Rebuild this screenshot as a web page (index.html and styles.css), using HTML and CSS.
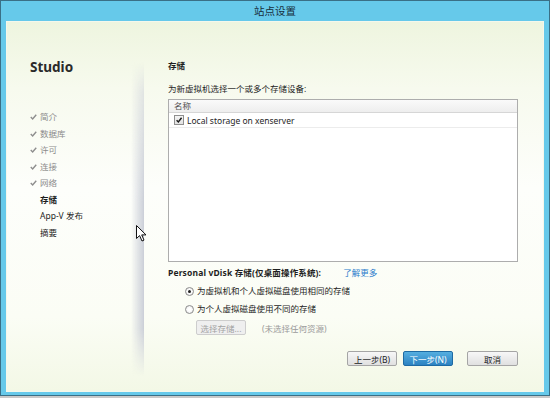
FILE: index.html
```html
<!DOCTYPE html>
<html lang="zh-CN">
<head>
    <meta charset="UTF-8">
    <title>站点设置</title>
    <link rel="stylesheet" href="styles.css">
</head>
<body>
    <div class="window">
        <div class="titlebar">站点设置</div>

        <div class="content">
            <aside class="sidebar">
                <h1 class="brand">Studio</h1>
                <ul class="steps">
                    <li class="done"><svg class="tick" viewBox="0 0 8 7"><path d="M0.8 3.6 L3 5.8 L7.2 0.8"/></svg>简介</li>
                    <li class="done"><svg class="tick" viewBox="0 0 8 7"><path d="M0.8 3.6 L3 5.8 L7.2 0.8"/></svg>数据库</li>
                    <li class="done"><svg class="tick" viewBox="0 0 8 7"><path d="M0.8 3.6 L3 5.8 L7.2 0.8"/></svg>许可</li>
                    <li class="done"><svg class="tick" viewBox="0 0 8 7"><path d="M0.8 3.6 L3 5.8 L7.2 0.8"/></svg>连接</li>
                    <li class="done"><svg class="tick" viewBox="0 0 8 7"><path d="M0.8 3.6 L3 5.8 L7.2 0.8"/></svg>网络</li>
                    <li class="current">存储</li>
                    <li>App-V 发布</li>
                    <li>摘要</li>
                </ul>
            </aside>

            <main class="panel">
                <h2 class="panel-title">存储</h2>
                <p class="hint">为新虚拟机选择一个或多个存储设备:</p>

                <div class="list">
                    <div class="list-head">名称</div>
                    <div class="list-row">
                        <span class="checkbox"><svg viewBox="0 0 10 10"><path d="M2 5.2 L4.2 7.4 L8.2 2.2"/></svg></span>
                        Local storage on xenserver
                    </div>
                </div>

                <div class="pvd">
                    <span class="pvd-label">Personal vDisk 存储(仅桌面操作系统):</span>
                    <a class="learn" href="#">了解更多</a>
                </div>

                <div class="radio-row"><span class="radio on"></span>为虚拟机和个人虚拟磁盘使用相同的存储</div>
                <div class="radio-row"><span class="radio"></span>为个人虚拟磁盘使用不同的存储</div>

                <div class="select-row">
                    <button class="btn btn-disabled" type="button" disabled>选择存储...</button>
                    <span class="none">(未选择任何资源)</span>
                </div>

                <div class="actions">
                    <button class="btn" type="button">上一步(B)</button>
                    <button class="btn btn-primary" type="button">下一步(N)</button>
                    <button class="btn btn-cancel" type="button">取消</button>
                </div>
            </main>

            <svg class="cursor" viewBox="0 0 11 17"><path d="M0.5 0.5 L0.5 13.5 L3.6 10.6 L6 16 L8 15.1 L5.7 9.9 L10 9.9 Z"/></svg>
        </div>
    </div>
</body>
</html>
```

FILE: styles.css
```css
:root {
    --frame: #66c9ea;
    --frame-edge: #3a6f86;
    --text: #1e1e1e;
    --muted: #8b8b8b;
    --line: #adadad;
    --link: #2a7ccc;
}

* {
    margin: 0;
    padding: 0;
    box-sizing: border-box;
}

body {
    background-color: #c9c9c9;
    font-family: 'Noto Sans', 'Noto Sans CJK SC', sans-serif;
    font-size: 8.5px;
    color: var(--text);
}

.window {
    width: 550px;
    height: 396px;
    background-color: var(--frame);
    border: 1px solid var(--frame-edge);
    display: flex;
    flex-direction: column;
}

.titlebar {
    height: 20px;
    line-height: 20px;
    text-align: center;
    font-size: 10.5px;
    color: #182f3d;
}

.content {
    flex: 1;
    margin: 0 5px 3px 5px;
    display: flex;
    position: relative;
    background: linear-gradient(180deg, #eef5df 0%, #f7faee 18%, #fdfefb 45%, #fbfdf5 80%, #f3f8e6 100%);
    border: 1px solid #f4f8ec;
}

/* left column */
.sidebar {
    width: 137px;
    padding: 36px 0 0 23px;
    position: relative;
}

.sidebar::after {
    content: '';
    position: absolute;
    top: 40px;
    right: 0;
    bottom: 15px;
    width: 13px;
    background: linear-gradient(90deg, rgba(215, 218, 225, 0), rgba(200, 204, 214, 0.95));
    -webkit-mask-image: linear-gradient(180deg, transparent 0, rgba(0, 0, 0, 0.5) 30px, #000 140px, #000 85%, transparent 100%);
    mask-image: linear-gradient(180deg, transparent 0, rgba(0, 0, 0, 0.5) 30px, #000 140px, #000 85%, transparent 100%);
}

.brand {
    font-size: 13.5px;
    font-weight: 700;
    color: #2a2a2a;
    line-height: 18px;
    margin-bottom: 33px;
}

.steps {
    list-style: none;
}

.steps li {
    position: relative;
    height: 16.5px;
    line-height: 16.5px;
    padding-left: 10px;
}

.steps li.done {
    color: var(--muted);
}

.steps li.current {
    font-weight: 700;
}

.steps li.current::after {
    content: '';
    position: absolute;
    right: -114px;
    top: 3px;
    border-top: 5px solid transparent;
    border-bottom: 5px solid transparent;
    border-right: 4px solid #fff;
    z-index: 1;
}

.tick {
    position: absolute;
    left: 0;
    top: 5px;
    width: 7px;
    height: 6px;
    fill: none;
    stroke: #8d8d8d;
    stroke-width: 1.6;
}

/* right panel */
.panel {
    flex: 1;
    padding: 37px 25px 0 24px;
    display: flex;
    flex-direction: column;
}

.panel-title {
    font-size: 8.5px;
    font-weight: 700;
    line-height: 14px;
}

.hint {
    line-height: 14px;
    margin-top: 9px;
}

.list {
    margin-top: 3px;
    height: 163px;
    border: 1px solid var(--line);
    background-color: #fff;
}

.list-head {
    height: 13px;
    line-height: 12px;
    padding-left: 5px;
    color: #505050;
    background: linear-gradient(180deg, #fafafa, #eeeeee);
    border-bottom: 1px solid #d6d6d6;
}

.list-row {
    height: 15px;
    display: flex;
    align-items: center;
    gap: 3px;
    padding-left: 5px;
    border-bottom: 1px solid #ececec;
}

.checkbox {
    width: 10px;
    height: 10px;
    border: 1px solid #8f8f8f;
    background: linear-gradient(180deg, #f4f4f4, #e2e2e2);
    display: flex;
}

.checkbox svg {
    width: 8px;
    height: 8px;
    fill: none;
    stroke: #1a1a1a;
    stroke-width: 1.8;
}

.pvd {
    margin-top: 4px;
    line-height: 14px;
    display: flex;
}

.pvd-label {
    font-weight: 700;
    letter-spacing: 0.15px;
    margin-right: 22px;
}

.learn {
    color: var(--link);
    text-decoration: none;
}

.radio-row {
    margin-top: 4px;
    margin-left: 17px;
    line-height: 14px;
    display: flex;
    align-items: center;
    gap: 3px;
}

.radio-row:first-of-type {
    margin-top: 5px;
}

.radio {
    width: 9px;
    height: 9px;
    border-radius: 50%;
    border: 1px solid #8c8c8c;
    background: radial-gradient(circle, #ffffff 30%, #e4e4e4 100%);
    position: relative;
}

.radio.on::after {
    content: '';
    position: absolute;
    left: 2px;
    top: 2px;
    width: 3px;
    height: 3px;
    border-radius: 50%;
    background-color: #222;
}

.select-row {
    margin-top: 4px;
    margin-left: 28px;
    display: flex;
    align-items: center;
    gap: 16px;
}

.none {
    color: #9a9a9a;
}

.btn {
    height: 15px;
    width: 50px;
    font-family: inherit;
    font-size: 8.5px;
    color: #222;
    border: 1px solid #a5a5a5;
    border-radius: 2px;
    background: linear-gradient(180deg, #f7f7f7, #e0e0e0);
}

.btn-disabled {
    color: #a2a2a2;
    border-color: #cdcdcd;
    background: #efefef;
}

.btn-primary {
    color: #fff;
    border-color: #1e6aa3;
    background: linear-gradient(180deg, #55aee0, #2c82c2);
}

.actions {
    margin-top: 16px;
    display: flex;
    justify-content: flex-end;
    gap: 6px;
}

.btn-cancel {
    width: 51px;
    margin-left: 8px;
}

.cursor {
    position: absolute;
    left: 129px;
    top: 203px;
    width: 11px;
    height: 17px;
    fill: #fff;
    stroke: #111;
    stroke-width: 1;
    stroke-linejoin: round;
    z-index: 2;
}
```
